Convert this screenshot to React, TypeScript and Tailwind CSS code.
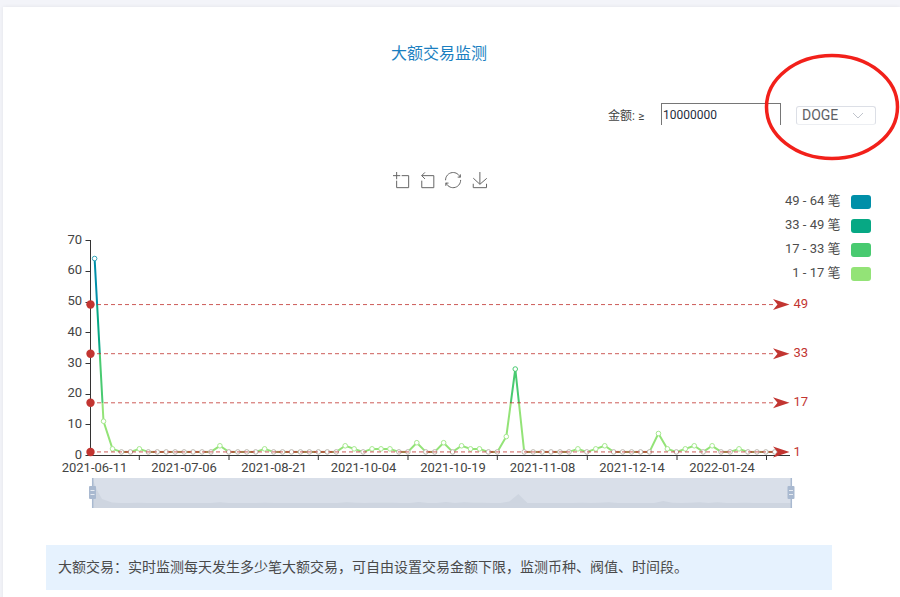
import React from "react";

const bumps: Record<number, number> = {
  0: 64, 1: 11, 2: 2, 5: 2, 14: 3, 19: 2, 28: 3, 29: 2, 31: 2, 32: 2, 33: 2, 36: 4, 39: 4, 41: 3, 42: 2, 43: 2,
  46: 6, 47: 28, 54: 2, 56: 2, 57: 3, 63: 7, 64: 2, 66: 2, 67: 3, 69: 3, 72: 2,
};
const data = Array.from({ length: 77 }, (_, i) => bumps[i] ?? 1);
const X = (i: number) => 94.6 + i * 8.95;
const Y = (v: number) => 455 - v * 3.07;
const linePts = data.map((v, i) => `${X(i).toFixed(1)},${Y(v).toFixed(1)}`).join(" ");
const colorOf = (v: number) => (v === 1 ? "#b9b5ab" : v > 49 ? "#33a5b9" : v > 33 ? "#07a884" : v > 17 ? "#48ca70" : "#a6e98f");
const sx = (i: number) => 93 + i * 9.05;
const shadowY = (v: number) => 503 - (v - 1) * 0.33;

const marks = [49, 33, 17, 1];
const yTicks = [0, 10, 20, 30, 40, 50, 60, 70];
const xTicks = [139.3, 229, 318.3, 408, 497.3, 587.3, 677, 766.5];
const xLabels: [number, string][] = [
  [94.5, "2021-06-11"], [184, "2021-07-06"], [274, "2021-08-21"], [363.5, "2021-10-04"],
  [453, "2021-10-19"], [542.5, "2021-11-08"], [632, "2021-12-14"], [722, "2022-01-24"],
];
const legend: [string, string, number][] = [
  ["49 - 64 笔", "#008fa8", 195],
  ["33 - 49 笔", "#07a884", 219],
  ["17 - 33 笔", "#48ca70", 243],
  ["1 - 17 笔", "#93e377", 267],
];
const tools: [number, string][] = [
  [393, "M0,13.5h26.9 M13.5,26.9V0 M32.1,13.5H58V58H13.5 V32.1"],
  [419, "M22,1.4L9.9,13.5l12.3,12.3 M10.3,13.5H54.9v44.6 H10.3v-26"],
  [445, "M47,18.9h9.8V8.7 M56.3,20.1 C52.1,9,40.5,0.6,26.8,2.1C12.6,3.7,1.6,16.2,2.1,30.6 M13,41.1H3.1v10.2 M3.7,39.9c4.2,11.1,15.8,19.5,29.5,18 c14.2-1.6,25.2-14.1,24.7-28.5"],
  [472, "M4.7,22.9L29.3,45.5L54.7,23.4M4.6,43.6L4.6,58L53.8,58L53.8,43.6M29.2,45.1L29.2,0"],
];
const font = "Roboto, 'Noto Sans CJK SC', sans-serif";

function Chart() {
  const f = (v: number) => (Y(v) - Y(64)) / (Y(0) - Y(64));
  return (
    <svg viewBox="3 165 897 350" className="block w-[897px] h-[350px]" style={{ fontFamily: font }}>
      <defs>
        <linearGradient id="vm" gradientUnits="userSpaceOnUse" x1="0" y1={Y(64)} x2="0" y2={Y(0)}>
          <stop offset={f(49)} stopColor="#008fa8" />
          <stop offset={f(49)} stopColor="#07a884" />
          <stop offset={f(33)} stopColor="#07a884" />
          <stop offset={f(33)} stopColor="#48ca70" />
          <stop offset={f(17)} stopColor="#48ca70" />
          <stop offset={f(17)} stopColor="#93e377" />
        </linearGradient>
      </defs>

      {tools.map(([x, d]) => (
        <g key={x} transform={`translate(${x} 172) scale(0.27)`}>
          <path d={d} fill="none" stroke="#666" strokeWidth="1" vectorEffect="non-scaling-stroke" />
        </g>
      ))}

      {legend.map(([t, c, y]) => (
        <g key={t}>
          <text x="840.5" y={y + 10} textAnchor="end" fontSize="13" fill="#4d4d4d">{t}</text>
          <rect x="851" y={y} width="20" height="14" rx="3" fill={c} />
        </g>
      ))}

      <line x1="90.5" y1="240" x2="90.5" y2="455" stroke="#333" />
      <line x1="90" y1="455.5" x2="790" y2="455.5" stroke="#333" />
      {yTicks.map((v) => (
        <g key={v}>
          <line x1="85.5" x2="90.5" y1={Math.round(Y(v)) + 0.5} y2={Math.round(Y(v)) + 0.5} stroke="#333" />
          <text x="82" y={Y(v) + 3.6} textAnchor="end" fontSize="13" fill="#444">{v}</text>
        </g>
      ))}
      {xTicks.map((x) => (
        <line key={x} x1={x} x2={x} y1="455" y2="460" stroke="#333" />
      ))}
      {xLabels.map(([x, t]) => (
        <text key={t} x={x} y="471.5" textAnchor="middle" fontSize="13" fill="#444">{t}</text>
      ))}

      <polyline points={linePts} fill="none" stroke="url(#vm)" strokeWidth="2" strokeLinejoin="round" />
      {data.slice(1).map((v, i) =>
        v === 1 && data[i] === 1 ? (
          <line key={i} x1={X(i)} x2={X(i + 1)} y1={Y(1)} y2={Y(1)} stroke="#a8804f" strokeWidth="2" />
        ) : null
      )}
      {data.map((v, i) => (
        <circle key={i} cx={X(i)} cy={Y(v)} r="2.3" fill="#fff" stroke={colorOf(v)} strokeWidth="1" />
      ))}

      {marks.map((v) => {
        const y = Y(v);
        return (
          <g key={v}>
            <line x1="90" x2="776" y1={y} y2={y} stroke="#c23531" strokeWidth="1" strokeDasharray="4 3" opacity="0.8" />
            <circle cx="90.5" cy={y} r="4.2" fill="#c23531" />
            <polygon points={`789.5,${y} 773,${y - 5.5} 777.5,${y} 773,${y + 5.5}`} fill="#c23531" />
            <text x="793.5" y={y + 3.6} fontSize="13" fill="#c23531">{v}</text>
          </g>
        );
      })}

      <rect x="92.5" y="478" width="699" height="30" fill="#d9dfe9" />
      <polygon
        points={
          "93,508 93,480 97,490 102,499 112,502.5 " +
          data.slice(3).map((v, i) => `${sx(i + 3).toFixed(1)},${shadowY(v).toFixed(1)}`).join(" ") +
          " 792,503 792,508"
        }
        fill="#ced5e0"
      />
      <line x1="92.7" x2="92.7" y1="478" y2="508" stroke="#a9b9d0" strokeWidth="1.5" />
      <line x1="791.3" x2="791.3" y1="478" y2="508" stroke="#a9b9d0" strokeWidth="1.5" />
      {[92.5, 791].map((x) => (
        <g key={x}>
          <rect x={x - 3.5} y="486" width="7" height="13" rx="1" fill="#a9b9d0" />
          <line x1={x - 2} x2={x + 2} y1="490.5" y2="490.5" stroke="#e6ebf2" />
          <line x1={x - 2} x2={x + 2} y1="494.5" y2="494.5" stroke="#e6ebf2" />
        </g>
      ))}
    </svg>
  );
}

export default function App() {
  return (
    <div className="relative h-[597px] w-[900px] overflow-hidden bg-[#f3f4f9] pl-[3px] pt-[7px]" style={{ fontFamily: font }}>
      <div className="h-[600px] bg-white shadow-[0_0_4px_rgba(0,0,0,0.07)]">
        <div className="ml-[43px] w-[786px] pt-[37px] text-center text-[16px] leading-[20px] text-[#1b7fc1]">大额交易监测</div>
        <div className="mt-[39px] flex h-[22px] items-start">
          <span className="ml-[605px] mt-[5px] w-[38px] whitespace-nowrap text-[12px] leading-[16px] text-[#444]">金额: ≥</span>
          <input
            readOnly
            value="10000000"
            className="ml-[15px] h-[22px] w-[120px] border border-b-0 border-[#767676] bg-white pl-px text-[12px] text-[#1f2d3d] outline-none"
          />
          <div className="ml-[15px] mt-[3px] flex h-[19px] w-[80px] items-center justify-between rounded-[3px] border border-b-[#eceef2] border-[#dcdfe6] pl-[5px] pr-[11px] text-[14px] text-[#606266]">
            <span>DOGE</span>
            <svg width="12" height="7" viewBox="0 0 12 7" fill="none" stroke="#c0c4cc" strokeWidth="1">
              <path d="M1 1l5 5 5-5" />
            </svg>
          </div>
        </div>
        <div className="mt-[40px]">
          <Chart />
        </div>
        <div className="ml-[43px] mt-[30px] flex h-[45px] w-[786px] items-center bg-[#e6f2fe] pl-[12px] text-[14px] text-[#4a4a4a]">
          大额交易：实时监测每天发生多少笔大额交易，可自由设置交易金额下限，监测币种、阀值、时间段。
        </div>
      </div>
      <svg className="absolute left-[760px] top-[50px]" width="140" height="114" viewBox="0 0 140 114" fill="none">
        <ellipse cx="72" cy="57" rx="65.5" ry="51.5" stroke="#f2201a" strokeWidth="3.5" />
      </svg>
    </div>
  );
}
